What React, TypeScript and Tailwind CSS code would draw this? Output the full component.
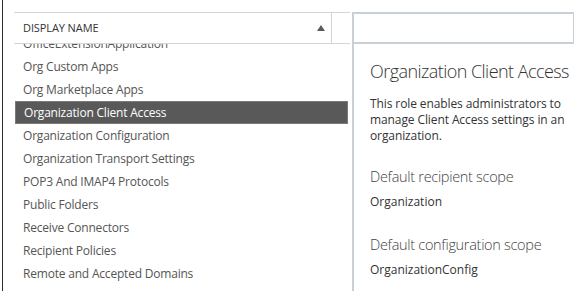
import React from "react";

const rows = [
  "OfficeExtensionApplication",
  "Org Custom Apps",
  "Org Marketplace Apps",
  "Organization Client Access",
  "Organization Configuration",
  "Organization Transport Settings",
  "POP3 And IMAP4 Protocols",
  "Public Folders",
  "Receive Connectors",
  "Recipient Policies",
  "Remote and Accepted Domains",
];

export default function App() {
  return (
    <div
      className="w-[586px] h-[291px] bg-white overflow-hidden flex"
      style={{ fontFamily: '"Open Sans", "Noto Sans", sans-serif' }}
    >
      <div className="w-[3px] shrink-0 border-r border-[#2a2a2a]" />
      <div className="w-[11px] shrink-0" />
      {/* Left list panel */}
      <div className="w-[336px] shrink-0 flex flex-col pt-[12px]">
        <div className="h-[32px] flex border-t border-b border-[#d4d4d4] shrink-0">
          <div className="w-[318px] border-r border-[#d4d4d4] flex items-center justify-between pl-[9px] pr-[6px]">
            <span className="text-[11px] text-[#333] tracking-[-0.1px]">DISPLAY NAME</span>
            <svg width="8" height="6" viewBox="0 0 8 6">
              <path d="M4 0 L8 6 L0 6 Z" fill="#5a5a5a" />
            </svg>
          </div>
          <div className="flex-1" />
        </div>
        <div className="flex-1 overflow-hidden">
          <div className="mt-[-12px] flex flex-col">
            {rows.map((r) => {
              const sel = r === "Organization Client Access";
              return (
                <div
                  key={r}
                  className={
                    sel
                      ? "h-[23px] mr-[2px] ml-[1px] flex items-center pl-[8px] bg-[#595959] border border-[#7a7a7a] text-white text-[12px] tracking-[-0.2px]"
                      : "h-[23px] flex items-center pl-[9px] text-[#555] text-[12px] tracking-[-0.2px]"
                  }
                >
                  {r}
                </div>
              );
            })}
          </div>
        </div>
      </div>
      <div className="w-[2px] shrink-0" />
      {/* Right detail panel */}
      <div className="w-[222px] shrink-0 flex flex-col pt-[12px]">
        <div className="flex-1 flex flex-col border-l-2 border-[#c9d0d5]">
          <div className="h-[32px] border-t-2 border-r border-b-2 border-[#c9d0d5] shrink-0" />
          <div className="pl-[16px] pt-[15px] text-[#333]">
            <div className="text-[18px] font-light leading-[24px] tracking-[-0.55px] whitespace-nowrap">
              Organization Client Access
            </div>
            <div className="mt-[13px] text-[12px] leading-[16px] text-[#333] pr-[4px] tracking-[-0.1px]">
              This role enables administrators to manage Client Access settings in an organization.
            </div>
            <div className="mt-[23px] text-[14.5px] font-light leading-[20px] tracking-[-0.3px] text-[#444]">
              Default recipient scope
            </div>
            <div className="mt-[7px] text-[12px] leading-[16px]">Organization</div>
            <div className="mt-[25px] text-[14.5px] font-light leading-[20px] tracking-[-0.3px] text-[#444]">
              Default configuration scope
            </div>
            <div className="mt-[7px] text-[12px] leading-[16px]">OrganizationConfig</div>
          </div>
        </div>
      </div>
    </div>
  );
}
